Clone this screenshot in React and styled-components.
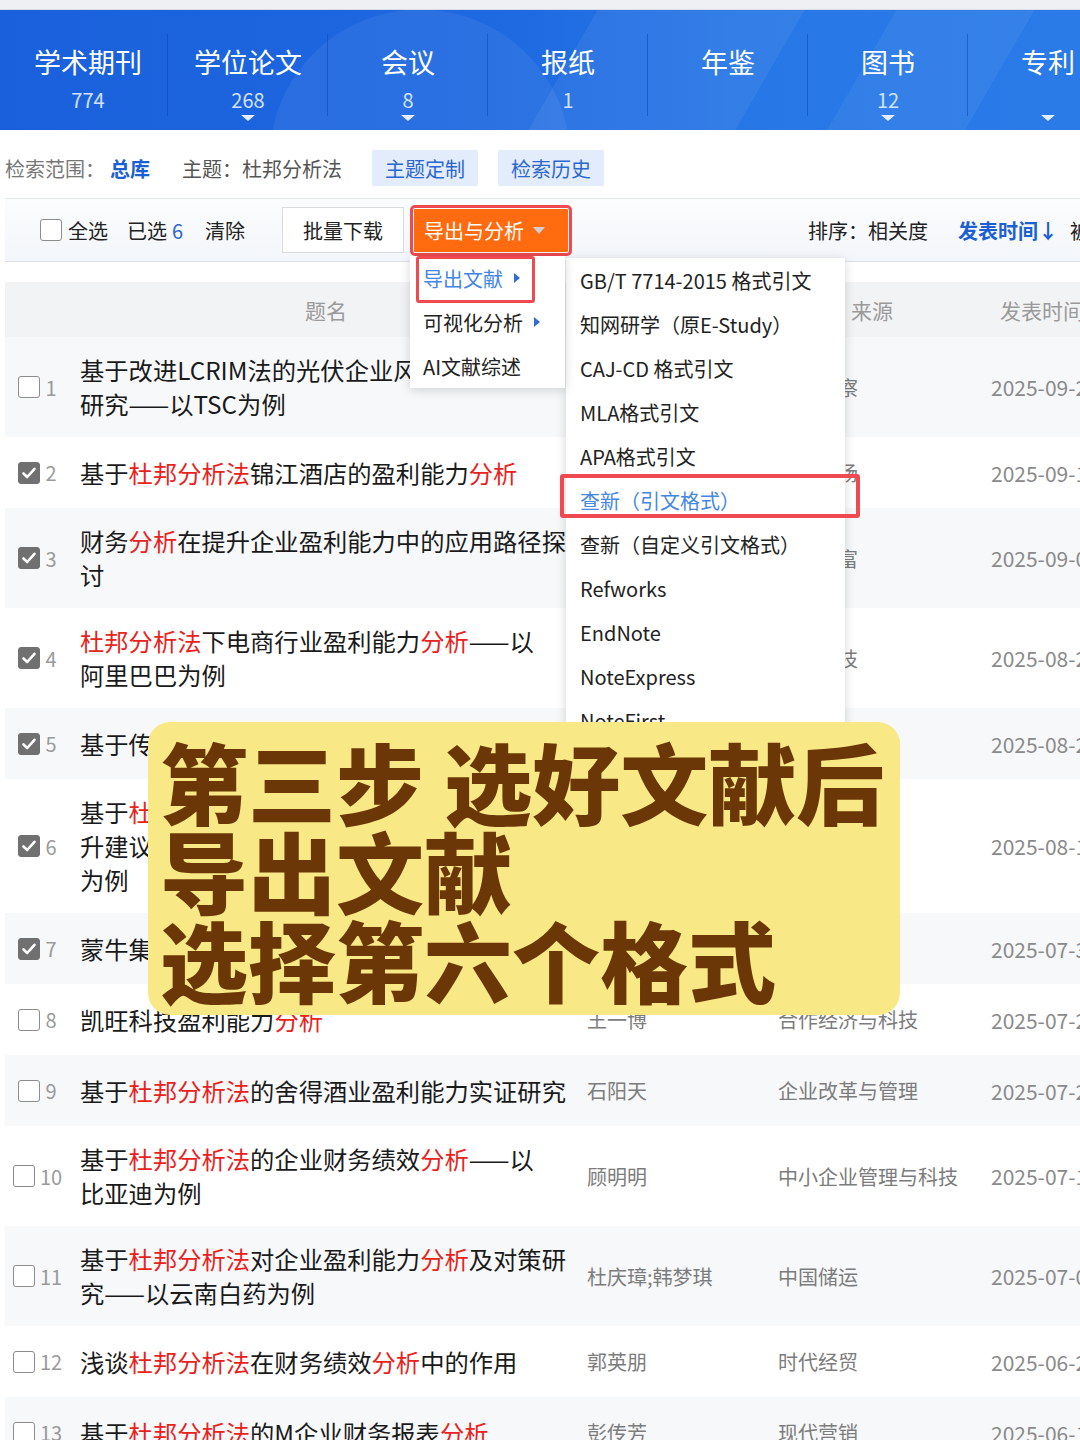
import React from 'react';
import styled, { createGlobalStyle } from 'styled-components';

const GlobalStyle = createGlobalStyle`
  html, body { margin: 0; padding: 0; background: #fff; }
  body { font-family: "Noto Sans CJK SC", "Noto Sans", sans-serif; }
  * { box-sizing: border-box; }
`;

const Page = styled.div`
  position: relative;
  width: 1080px;
  height: 1440px;
  overflow: hidden;
  background: #fff;
`;

const TopStrip = styled.div`
  height: 10px;
  background: #eef0f3;
  border-bottom: 1px solid #d9dce2;
`;

const TabBar = styled.div`
  display: flex;
  height: 120px;
  padding-left: 8px;
  background:
    radial-gradient(circle at 420px 150px, rgba(255,255,255,0.06) 0 150px, transparent 151px),
    linear-gradient(120deg, transparent 0 52%, rgba(255,255,255,0.06) 52% 70%, transparent 70%),
    linear-gradient(120deg, transparent 0 78%, rgba(255,255,255,0.05) 78% 90%, transparent 90%),
    linear-gradient(90deg, #1a60dc 0%, #1e68e0 45%, #2777e6 70%, #2a7be8 100%);
`;

const Tab = styled.div`
  position: relative;
  flex: none;
  width: 160px;
  display: flex;
  flex-direction: column;
  align-items: center;
  padding-top: 33px;
  &::after {
    content: '';
    position: absolute;
    right: 0;
    top: 24px;
    bottom: 14px;
    width: 1px;
    background: rgba(12, 70, 180, 0.55);
  }
`;

const TabLabel = styled.div`
  font-size: 27px;
  line-height: 38px;
  color: #fff;
  white-space: nowrap;
`;

const TabCount = styled.div`
  margin-top: 7px;
  height: 24px;
  font-size: 20px;
  line-height: 24px;
  color: #d2e1ff;
`;

const TabCaret = styled.div`
  margin-top: 3px;
  width: 0;
  height: 0;
  border-left: 7px solid transparent;
  border-right: 7px solid transparent;
  border-top: 6px solid ${p => (p.$show ? '#e4ecff' : 'transparent')};
`;

const ScopeRow = styled.div`
  display: flex;
  align-items: center;
  height: 68px;
  padding: 8px 0 0 5px;
  font-size: 20px;
  white-space: nowrap;
`;

const ScopeLabel = styled.span`
  color: #777;
`;

const ScopeValue = styled.span`
  margin-left: 5px;
  color: #1c5fd3;
  font-weight: 700;
`;

const ScopeTopic = styled.span`
  margin-left: 32px;
  color: #555;
`;

const Chip = styled.span`
  margin-left: ${p => p.$gap}px;
  height: 36px;
  padding: 0 13px;
  display: inline-flex;
  align-items: center;
  background: #e3ecfa;
  color: #2b67cf;
  border-radius: 2px;
`;

const Toolbar = styled.div`
  margin-left: 5px;
  height: 64px;
  display: flex;
  align-items: center;
  padding-left: 35px;
  background: linear-gradient(#fbfcfd, #f3f6fa);
  border-top: 1px solid #e6e9ee;
  border-bottom: 1px solid #dde1e7;
  font-size: 20px;
  color: #222;
  white-space: nowrap;
  & > * { flex: none; }
`;

const Box = styled.span`
  display: inline-flex;
  align-items: center;
  justify-content: center;
  width: 22px;
  height: 22px;
  border-radius: 3px;
  border: 1.5px solid ${p => (p.$checked ? '#707070' : '#8c8c8c')};
  background: ${p => (p.$checked ? '#707070' : '#fff')};
  flex: none;
`;

const ToolText = styled.span`
  margin-left: ${p => p.$gap || 0}px;
  color: ${p => p.$color || '#222'};
  font-weight: ${p => (p.$bold ? 700 : 400)};
`;

const PlainButton = styled.span`
  margin-left: 37px;
  width: 122px;
  height: 46px;
  display: inline-flex;
  align-items: center;
  justify-content: center;
  background: #fff;
  border: 1px solid #d8dbe0;
  color: #222;
`;

const OrangeButton = styled.span`
  margin-left: 10px;
  width: 154px;
  height: 43px;
  display: inline-flex;
  align-items: center;
  padding-left: 10px;
  background: #ff6b0e;
  color: #fff;
  outline: 3px solid #ef4a52;
  outline-offset: 1px;
  border-radius: 1px;
`;

const SmallCaret = styled.span`
  margin-left: 9px;
  width: 0;
  height: 0;
  border-left: 6px solid transparent;
  border-right: 6px solid transparent;
  border-top: 7px solid #cfcfcf;
`;

const Table = styled.div`
  margin: 20px 0 0 5px;
`;

const cols = '75px 507px 191px 213px 200px';

const HeadRow = styled.div`
  display: grid;
  grid-template-columns: ${cols};
  align-items: center;
  height: 55px;
  background: #f2f3f5;
  color: #9a9a9a;
  font-size: 21px;
  white-space: nowrap;
`;

const HeadCell = styled.div`
  text-align: ${p => p.$align || 'center'};
  padding-right: ${p => p.$pr || 0}px;
  padding-left: ${p => p.$pl || 0}px;
`;

const Row = styled.div`
  display: grid;
  grid-template-columns: ${cols};
  align-items: center;
  min-height: 71px;
  padding: 16px 0;
  background: ${p => (p.$alt ? '#f7f8fa' : '#fff')};
  white-space: nowrap;
`;

const CheckCell = styled.div`
  display: flex;
  align-items: center;
  justify-content: center;
  gap: 5px;
  padding-right: 10px;
`;

const RowNum = styled.span`
  font-size: 20px;
  color: #9a9a9a;
`;

const TitleCell = styled.div`
  padding-right: 15px;
  font-size: 24.3px;
  line-height: 34px;
  color: #1a1a1a;
`;

const TitleLine = styled.div`
  white-space: nowrap;
`;

const Hit = styled.span`
  color: #e8231d;
`;

const MetaCell = styled.div`
  font-size: ${p => p.$size || 20}px;
  color: ${p => p.$color || '#7c7c7c'};
  overflow: hidden;
`;

const Menu = styled.div`
  position: absolute;
  left: ${p => p.$left}px;
  top: ${p => p.$top}px;
  width: ${p => p.$width}px;
  background: #fff;
  box-shadow: 0 2px 10px rgba(0, 0, 0, 0.16);
  z-index: ${p => p.$z};
`;

const MenuItem = styled.div`
  position: relative;
  height: 44px;
  display: flex;
  align-items: center;
  padding-left: ${p => p.$pl}px;
  font-size: 20px;
  color: ${p => (p.$active ? '#4487e2' : '#222')};
  white-space: nowrap;
`;

const SubArrow = styled.span`
  margin-left: 11px;
  width: 0;
  height: 0;
  border-top: 5px solid transparent;
  border-bottom: 5px solid transparent;
  border-left: 6px solid #2d6dd5;
`;

const Mark = styled.span`
  position: absolute;
  left: ${p => p.$l}px;
  top: ${p => p.$t}px;
  width: ${p => p.$w}px;
  height: ${p => p.$h}px;
  border: ${p => p.$b}px solid #ef4a52;
  border-radius: 3px;
  pointer-events: none;
`;

const Caption = styled.div`
  position: absolute;
  left: 148px;
  top: 722px;
  width: 752px;
  height: 293px;
  padding: 13px 0 0 12px;
  background: #f9e986;
  border-radius: 22px;
  z-index: 10;
  font-family: "Noto Sans CJK SC", sans-serif;
  font-size: 88px;
  line-height: 89px;
  font-weight: 900;
  color: #6b3707;
  white-space: pre;
`;

function CheckIcon() {
  return (
    <svg width="16" height="16" viewBox="0 0 16 16">
      <path d="M2.5 8.5 L6.2 12 L13.5 3.8" fill="none" stroke="#fff" strokeWidth="2.6" strokeLinecap="round" strokeLinejoin="round" />
    </svg>
  );
}

function Check({ checked }) {
  return <Box $checked={checked}>{checked ? <CheckIcon /> : null}</Box>;
}

function renderLine(str) {
  const parts = str.split(/(\[[^\]]+\])/g).filter(Boolean);
  return parts.map((p, i) =>
    p.startsWith('[') ? <Hit key={i}>{p.slice(1, -1)}</Hit> : <React.Fragment key={i}>{p}</React.Fragment>
  );
}

const tabs = [
  { label: '学术期刊', count: '774', caret: false },
  { label: '学位论文', count: '268', caret: true },
  { label: '会议', count: '8', caret: true },
  { label: '报纸', count: '1', caret: false },
  { label: '年鉴', count: '', caret: false },
  { label: '图书', count: '12', caret: true },
  { label: '专利', count: '', caret: true },
];

const rows = [
  { lines: ['基于改进LCRIM法的光伏企业风险评价', '研究——以TSC为例'], checked: false, author: '张晓丽', source: '商业观察', date: '2025-09-22' },
  { lines: ['基于[杜邦分析法]锦江酒店的盈利能力[分析]'], checked: true, author: '李娜', source: '中国市场', date: '2025-09-16' },
  { lines: ['财务[分析]在提升企业盈利能力中的应用路径探', '讨'], checked: true, author: '王静', source: '今日财富', date: '2025-09-05' },
  { lines: ['[杜邦分析法]下电商行业盈利能力[分析]——以', '阿里巴巴为例'], checked: true, author: '陈思雨', source: '时代科技', date: '2025-08-28' },
  { lines: ['基于传统[杜邦分析法]的安踏体育盈利能力[分析]'], checked: true, author: '刘洋', source: '商场现代化', date: '2025-08-20' },
  { lines: ['基于[杜邦分析法]的上市公司盈利能力[分析]及提', '升建议——以贵州茅台酒股份有限公司', '为例'], checked: true, author: '赵敏', source: '全国流通经济', date: '2025-08-12' },
  { lines: ['蒙牛集团盈利能力[分析]——基于[杜邦分析法]'], checked: true, author: '孙悦', source: '中国乳业', date: '2025-07-30' },
  { lines: ['凯旺科技盈利能力[分析]'], checked: false, author: '王一博', source: '合作经济与科技', date: '2025-07-25' },
  { lines: ['基于[杜邦分析法]的舍得酒业盈利能力实证研究'], checked: false, author: '石阳天', source: '企业改革与管理', date: '2025-07-20' },
  { lines: ['基于[杜邦分析法]的企业财务绩效[分析]——以', '比亚迪为例'], checked: false, author: '顾明明', source: '中小企业管理与科技', date: '2025-07-15' },
  { lines: ['基于[杜邦分析法]对企业盈利能力[分析]及对策研', '究——以云南白药为例'], checked: false, author: '杜庆璋;韩梦琪', source: '中国储运', date: '2025-07-08' },
  { lines: ['浅谈[杜邦分析法]在财务绩效[分析]中的作用'], checked: false, author: '郭英朋', source: '时代经贸', date: '2025-06-26' },
  { lines: ['基于[杜邦分析法]的M企业财务报表[分析]'], checked: false, author: '彭传芳', source: '现代营销', date: '2025-06-18' },
];

const formats = [
  'GB/T 7714-2015 格式引文',
  '知网研学（原E-Study）',
  'CAJ-CD 格式引文',
  'MLA格式引文',
  'APA格式引文',
  '查新（引文格式）',
  '查新（自定义引文格式）',
  'Refworks',
  'EndNote',
  'NoteExpress',
  'NoteFirst',
];

export default function App() {
  return (
    <Page>
      <GlobalStyle />
      <TopStrip />
      <TabBar>
        {tabs.map(t => (
          <Tab key={t.label}>
            <TabLabel>{t.label}</TabLabel>
            <TabCount>{t.count}</TabCount>
            <TabCaret $show={t.caret} />
          </Tab>
        ))}
      </TabBar>

      <ScopeRow>
        <ScopeLabel>检索范围：</ScopeLabel>
        <ScopeValue>总库</ScopeValue>
        <ScopeTopic>主题：杜邦分析法</ScopeTopic>
        <Chip $gap={30}>主题定制</Chip>
        <Chip $gap={20}>检索历史</Chip>
      </ScopeRow>

      <Toolbar>
        <Check checked={false} />
        <ToolText $gap={6}>全选</ToolText>
        <ToolText $gap={19}>已选</ToolText>
        <ToolText $gap={5} $color="#2b67cf">6</ToolText>
        <ToolText $gap={22}>清除</ToolText>
        <PlainButton>批量下载</PlainButton>
        <OrangeButton>
          导出与分析
          <SmallCaret />
        </OrangeButton>
        <ToolText $gap={240}>排序：相关度</ToolText>
        <ToolText $gap={30} $color="#1c5fd3" $bold>发表时间↓</ToolText>
        <ToolText $gap={12}>被引</ToolText>
        <ToolText $gap={20}>下载</ToolText>
      </Toolbar>

      <Table>
        <HeadRow>
          <HeadCell />
          <HeadCell $pr={15}>题名</HeadCell>
          <HeadCell>作者</HeadCell>
          <HeadCell $pr={25}>来源</HeadCell>
          <HeadCell $align="left" $pl={9}>发表时间</HeadCell>
        </HeadRow>
        {rows.map((r, i) => (
          <Row key={i} $alt={i % 2 === 0}>
            <CheckCell>
              <Check checked={r.checked} />
              <RowNum>{i + 1}</RowNum>
            </CheckCell>
            <TitleCell>
              {r.lines.map((l, j) => (
                <TitleLine key={j}>{renderLine(l)}</TitleLine>
              ))}
            </TitleCell>
            <MetaCell>{r.author}</MetaCell>
            <MetaCell>{r.source}</MetaCell>
            <MetaCell $size={21} $color="#8a8a8a">{r.date}</MetaCell>
          </Row>
        ))}
      </Table>

      <Menu $left={410} $top={256} $width={155} $z={6}>
        <MenuItem $pl={13} $active>
          导出文献<SubArrow />
          <Mark $l={6} $t={0} $w={119} $h={47} $b={3} />
        </MenuItem>
        <MenuItem $pl={13}>
          可视化分析<SubArrow />
        </MenuItem>
        <MenuItem $pl={13}>AI文献综述</MenuItem>
      </Menu>

      <Menu $left={566} $top={258} $width={279} $z={5}>
        {formats.map((f, i) => (
          <MenuItem key={f} $pl={14} $active={i === 5}>
            {f}
            {i === 5 ? <Mark $l={-6} $t={-4} $w={300} $h={44} $b={4} /> : null}
          </MenuItem>
        ))}
      </Menu>

      <Caption>{'第三步 选好文献后\n导出文献\n选择第六个格式'}</Caption>
    </Page>
  );
}
